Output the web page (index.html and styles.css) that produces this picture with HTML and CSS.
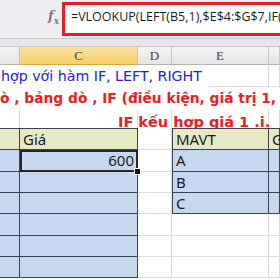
FILE: index.html
```html
<!DOCTYPE html>
<html lang="vi">
<head>
    <meta charset="UTF-8">
    <title>VLOOKUP kết hợp IF, LEFT, RIGHT</title>
    <link rel="stylesheet" href="styles.css">
</head>
<body>
<div class="sheet">
    <div class="formula-bar">
        <div class="fx-area"><span class="fx">f<sub>x</sub></span></div>
        <div class="formula-box">=VLOOKUP(LEFT(B5,1),$E$4:$G$7,IF(LEFT(B5,1)</div>
    </div>
    <div class="bar-gap"></div>

    <div class="row col-headers">
        <div class="ch cb"></div>
        <div class="ch cc sel">C</div>
        <div class="ch cd">D</div>
        <div class="ch ce">E</div>
        <div class="ch cf"></div>
    </div>

    <div class="row text-row r1">
        <div class="cell cb"><span class="spill blue">hợp với hàm IF, LEFT, RIGHT</span></div>
        <div class="cell cc"></div>
        <div class="cell cd"></div>
        <div class="cell ce"></div>
        <div class="cell cf"></div>
    </div>
    <div class="row text-row r2">
        <div class="cell cb"><span class="spill red">ò , bảng dò , IF (điều kiện, giá trị 1, giá trị 2)</span></div>
        <div class="cell cc"></div>
        <div class="cell cd"></div>
        <div class="cell ce"></div>
        <div class="cell cf"></div>
    </div>
    <div class="row text-row r3">
        <div class="cell cb"></div>
        <div class="cell cc"><span class="spill red low">IF kếu hợp giá 1 .i.</span></div>
        <div class="cell cd"></div>
        <div class="cell ce"></div>
        <div class="cell cf"></div>
    </div>

    <div class="row trow tall">
        <div class="cell cb thead tb"></div>
        <div class="cell cc thead tb">Giá</div>
        <div class="cell cd"></div>
        <div class="cell ce thead tb tl">MAVT</div>
        <div class="cell cf thead tb">G</div>
    </div>
    <div class="row trow tall">
        <div class="cell cb tbody"></div>
        <div class="cell cc tbody num active">600<i class="handle"></i></div>
        <div class="cell cd"></div>
        <div class="cell ce tbody tl">A</div>
        <div class="cell cf tbody"></div>
    </div>
    <div class="row trow">
        <div class="cell cb tbody"></div>
        <div class="cell cc tbody"></div>
        <div class="cell cd"></div>
        <div class="cell ce tbody tl">B</div>
        <div class="cell cf tbody"></div>
    </div>
    <div class="row trow">
        <div class="cell cb tbody"></div>
        <div class="cell cc tbody"></div>
        <div class="cell cd"></div>
        <div class="cell ce tbody tl">C</div>
        <div class="cell cf tbody"></div>
    </div>
    <div class="row trow tall">
        <div class="cell cb tbody"></div>
        <div class="cell cc tbody"></div>
        <div class="cell cd"></div>
        <div class="cell ce"></div>
        <div class="cell cf"></div>
    </div>
    <div class="row trow">
        <div class="cell cb tbody"></div>
        <div class="cell cc tbody"></div>
        <div class="cell cd"></div>
        <div class="cell ce"></div>
        <div class="cell cf"></div>
    </div>
    <div class="row trow">
        <div class="cell cb tbody"></div>
        <div class="cell cc tbody"></div>
        <div class="cell cd"></div>
        <div class="cell ce"></div>
        <div class="cell cf"></div>
    </div>
</div>
</body>
</html>
```

FILE: styles.css
```css
body {
    margin: 0;
    background: #fff;
}
.sheet {
    width: 280px;
    height: 280px;
    overflow: hidden;
}
.formula-bar {
    display: flex;
    height: 39px;
    background: #eceef1;
    border-bottom: 1px solid #c5c8cc;
    box-sizing: border-box;
    padding-top: 2px;
}
.fx-area {
    width: 62px;
    display: flex;
    justify-content: flex-end;
    padding: 6px 3px 0 0;
    box-sizing: border-box;
}
.fx {
    font-family: "DejaVu Serif", serif;
    font-style: italic;
    font-weight: bold;
    font-size: 13px;
    color: #7a7a7a;
}
.fx sub {
    font-size: 9px;
}
.formula-box {
    flex: 1;
    height: 34px;
    background: #fff;
    border: 3px solid #e21f26;
    border-right: none;
    box-sizing: border-box;
    padding: 3px 0 0 6px;
    font-family: "Open Sans", sans-serif;
    font-size: 12.5px;
    color: #1b1b1b;
    white-space: nowrap;
    overflow: hidden;
}
.bar-gap {
    height: 7px;
    background: #e6e8eb;
    border-bottom: 1px solid #c9c9c9;
}
.row {
    display: flex;
}
.cb { width: 20px; }
.cc { width: 118px; }
.cd { width: 34px; }
.ce { width: 97px; }
.cf { width: 11px; }
.ch, .cell {
    flex: none;
    box-sizing: border-box;
}
.col-headers {
    height: 18px;
}
.ch {
    background: linear-gradient(#f3f3f3, #e4e4e4);
    border-right: 1px solid #c6c6c6;
    border-bottom: 1px solid #b3b3b3;
    font-family: "Liberation Serif", serif;
    font-size: 13px;
    color: #444;
    text-align: center;
    line-height: 17px;
}
.ch.sel {
    background: linear-gradient(#fbe39a, #f4cf6c);
    border-bottom-color: #d9a73a;
}
.cell {
    height: 21px;
    border-right: 1px solid #dadcdd;
    border-bottom: 1px solid #dadcdd;
    font-family: "Noto Sans", sans-serif;
    font-size: 15px;
    line-height: 20px;
    color: #1a1a1a;
    padding: 0 3px;
    white-space: nowrap;
}
.text-row .cell {
    overflow: visible;
    padding: 0;
}
.r1 .cell { height: 22px; }
.r2 .cell { height: 21px; }
.r3 { height: 20px; overflow: hidden; }
.r3 .cell { height: 20px; border-bottom: none; }
.spill {
    position: relative;
    z-index: 1;
    display: inline-block;
    background: #fff;
    white-space: nowrap;
}
.blue {
    font-family: "DejaVu Sans", sans-serif;
    font-size: 14.2px;
    line-height: 21px;
    color: #2222d6;
    padding: 0 6px 0 1px;
}
.red {
    font-family: "DejaVu Sans", sans-serif;
    font-weight: bold;
    font-size: 13.8px;
    line-height: 21px;
    color: #ec1c24;
}
.low {
    margin: 4px 0 0 98px;
    font-size: 14.5px;
    background: transparent;
}
.trow.tall .cell {
    height: 22px;
    line-height: 21px;
}
.thead {
    background: #e5eac5;
    border-right-color: #3c4350;
    border-bottom-color: #3c4350;
}
.tbody {
    background: #c5d8f0;
    border-right-color: #3c4350;
    border-bottom-color: #3c4350;
}
.tb {
    border-top: 1px solid #3c4350;
}
.tl {
    border-left: 1px solid #3c4350;
}
.num {
    text-align: right;
}
.active {
    position: relative;
    outline: 2px solid #262626;
    outline-offset: -2px;
}
.handle {
    position: absolute;
    right: -4px;
    bottom: -4px;
    width: 5px;
    height: 5px;
    background: #111;
    border: 1px solid #fff;
    z-index: 2;
}
```
